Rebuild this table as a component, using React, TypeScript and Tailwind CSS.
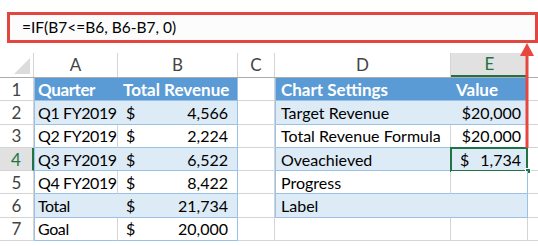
import React from "react";

const F = { fontFamily: "Lato, 'Open Sans', sans-serif" };

function RowNum({ n, active }: { n: number; active?: boolean }) {
  return active ? (
    <div className="w-[34px] shrink-0 h-full flex items-center justify-center text-[17px] bg-[#e1e1e1] text-[#217346] border-r-2 border-r-[#217346] border-b border-b-[#d4d4d4]">
      {n}
    </div>
  ) : (
    <div className="w-[34px] shrink-0 h-full flex items-center justify-center text-[17px] text-[#444] border-r border-r-[#d4d4d4] border-b border-b-[#d4d4d4]">
      {n}
    </div>
  );
}

type RowData = {
  n: number;
  a?: string;
  b?: string;
  d?: string;
  e?: React.ReactNode;
  leftKind: "head" | "band" | "white";
  rightKind: "head" | "band" | "white" | "none";
  active?: boolean;
  labelSpan?: boolean;
};

function Row({ r }: { r: RowData }) {
  const leftBg =
    r.leftKind === "head"
      ? "bg-[#5b9bd5] text-white font-bold text-[17px]"
      : r.leftKind === "band"
      ? "bg-[#ddebf7] text-black"
      : "bg-white text-black";
  const rightBg =
    r.rightKind === "head"
      ? "bg-[#5b9bd5] text-white font-bold text-[17px]"
      : r.rightKind === "band"
      ? "bg-[#ddebf7] text-black"
      : "bg-white text-black";
  const aBorderR = r.leftKind === "white" ? "border-r border-r-[#d4d4d4]" : "";
  const dBorderR =
    r.rightKind === "white" || r.rightKind === "none" ? "border-r border-r-[#d4d4d4]" : "";
  const rightBottom = r.rightKind === "none" ? "border-b border-b-[#d4d4d4]" : "border-b border-b-[#9bc2e6]";
  const isBHead = r.leftKind === "head";
  return (
    <div className="flex h-[23.3px] text-[16px] leading-none whitespace-nowrap">
      <RowNum n={r.n} active={r.active} />
      <div className={`w-[84px] shrink-0 h-full flex items-center pl-[3px] pt-[1px] tracking-[-0.4px] border-b border-b-[#9bc2e6] border-l border-l-[#9bc2e6] ${leftBg} ${aBorderR}`}>
        {r.a}
      </div>
      <div className={`w-[120px] shrink-0 h-full flex items-center pt-[1px] border-b border-b-[#9bc2e6] border-r border-r-[#9bc2e6] ${leftBg} ${isBHead ? "pl-[5px]" : "pl-[8px] pr-[9px] justify-between"}`}>
        {isBHead ? r.b : (<><span>$</span><span>{r.b}</span></>)}
      </div>
      <div className="w-[37px] shrink-0 h-full border-r border-r-[#d4d4d4] border-b border-b-[#d4d4d4]" />
      {r.labelSpan ? (
        <div className={`w-[253px] shrink-0 h-full flex items-center pl-[5px] pt-[1px] border-l border-l-[#9bc2e6] border-r border-r-[#9bc2e6] ${rightBottom} ${rightBg}`}>
          {r.d}
        </div>
      ) : (
        <>
          <div className={`w-[176px] shrink-0 h-full flex items-center pl-[5px] pt-[1px] ${r.rightKind === "none" ? "" : "border-l border-l-[#9bc2e6]"} ${rightBottom} ${rightBg} ${dBorderR}`}>
            {r.d}
          </div>
          <div className={`relative w-[77px] shrink-0 h-full flex items-center pt-[1px] ${rightBottom} ${r.rightKind === "none" ? "border-r border-r-[#d4d4d4]" : "border-r border-r-[#9bc2e6]"} ${rightBg}`}>
            {r.e}
            {r.active && (
              <>
                <div className="absolute left-[-1px] top-[-1px] w-[78px] h-[25px] border-2 border-[#217346]" />
                <div className="absolute left-[74px] top-[20px] w-[6px] h-[6px] bg-[#217346] border border-white" />
              </>
            )}
          </div>
        </>
      )}
      <div className="flex-1 h-full border-b border-b-[#d4d4d4]" />
    </div>
  );
}

export default function App() {
  const rows: RowData[] = [
    { n: 1, a: "Quarter", b: "Total Revenue", d: "Chart Settings", e: <span className="pl-[5px]">Value</span>, leftKind: "head", rightKind: "head" },
    { n: 2, a: "Q1 FY2019", b: "4,566", d: "Target Revenue", e: <span className="ml-auto pr-[6px]">$20,000</span>, leftKind: "band", rightKind: "band" },
    { n: 3, a: "Q2 FY2019", b: "2,224", d: "Total Revenue Formula", e: <span className="ml-auto pr-[6px]">$20,000</span>, leftKind: "white", rightKind: "white" },
    { n: 4, a: "Q3 FY2019", b: "6,522", d: "Oveachieved", e: <span className="flex w-full justify-between pl-[9px] pr-[6px]"><span>$</span><span>1,734</span></span>, leftKind: "band", rightKind: "band", active: true },
    { n: 5, a: "Q4 FY2019", b: "8,422", d: "Progress", e: null, leftKind: "white", rightKind: "white" },
    { n: 6, a: "Total", b: "21,734", d: "Label", leftKind: "band", rightKind: "band", labelSpan: true },
    { n: 7, a: "Goal", b: "20,000", d: "", e: null, leftKind: "white", rightKind: "none" },
  ];
  return (
    <div className="relative w-[538px] h-[246px] bg-white overflow-hidden" style={F}>
      <div className="pt-[12px] pl-[7px]">
        <div className="w-[531px] h-[31px] border-[3px] border-[#e2463f] bg-[#fcfcfc] flex items-center pl-[12px] text-[15.5px] text-black whitespace-nowrap">
          =IF(B7&lt;=B6, B6-B7, 0)
        </div>
      </div>
      <div className="h-[10px]" />
      {/* column headers */}
      <div className="flex h-[25px] text-[17px] text-[#444] border-b border-b-[#ababab]">
        <div className="relative w-[34px] shrink-0 h-full border-r border-r-[#d4d4d4]">
          <svg className="absolute left-[14px] top-[5px]" width="16" height="16" viewBox="0 0 16 16">
            <polygon points="16,0 16,16 0,16" fill="#dcdcdc" />
          </svg>
        </div>
        <div className="w-[84px] shrink-0 h-full flex items-center justify-center border-r border-r-[#d4d4d4]">A</div>
        <div className="w-[120px] shrink-0 h-full flex items-center justify-center border-r border-r-[#d4d4d4]">B</div>
        <div className="w-[37px] shrink-0 h-full flex items-center justify-center border-r border-r-[#d4d4d4]">C</div>
        <div className="w-[176px] shrink-0 h-full flex items-center justify-center border-r border-r-[#d4d4d4]">D</div>
        <div className="w-[77px] shrink-0 h-full flex items-center justify-center bg-[#e1e1e1] text-[#217346] border-b-2 border-b-[#217346]">E</div>
        <div className="flex-1 h-full" />
      </div>
      {rows.map((r) => (
        <Row key={r.n} r={r} />
      ))}
      {/* red arrow */}
      <svg className="absolute left-[518px] top-[43px]" width="18" height="106" viewBox="0 0 18 106">
        <polygon points="9,0 16,13 2,13" fill="#e8463e" />
        <rect x="7.5" y="12" width="3" height="93" fill="#e8463e" />
      </svg>
    </div>
  );
}
